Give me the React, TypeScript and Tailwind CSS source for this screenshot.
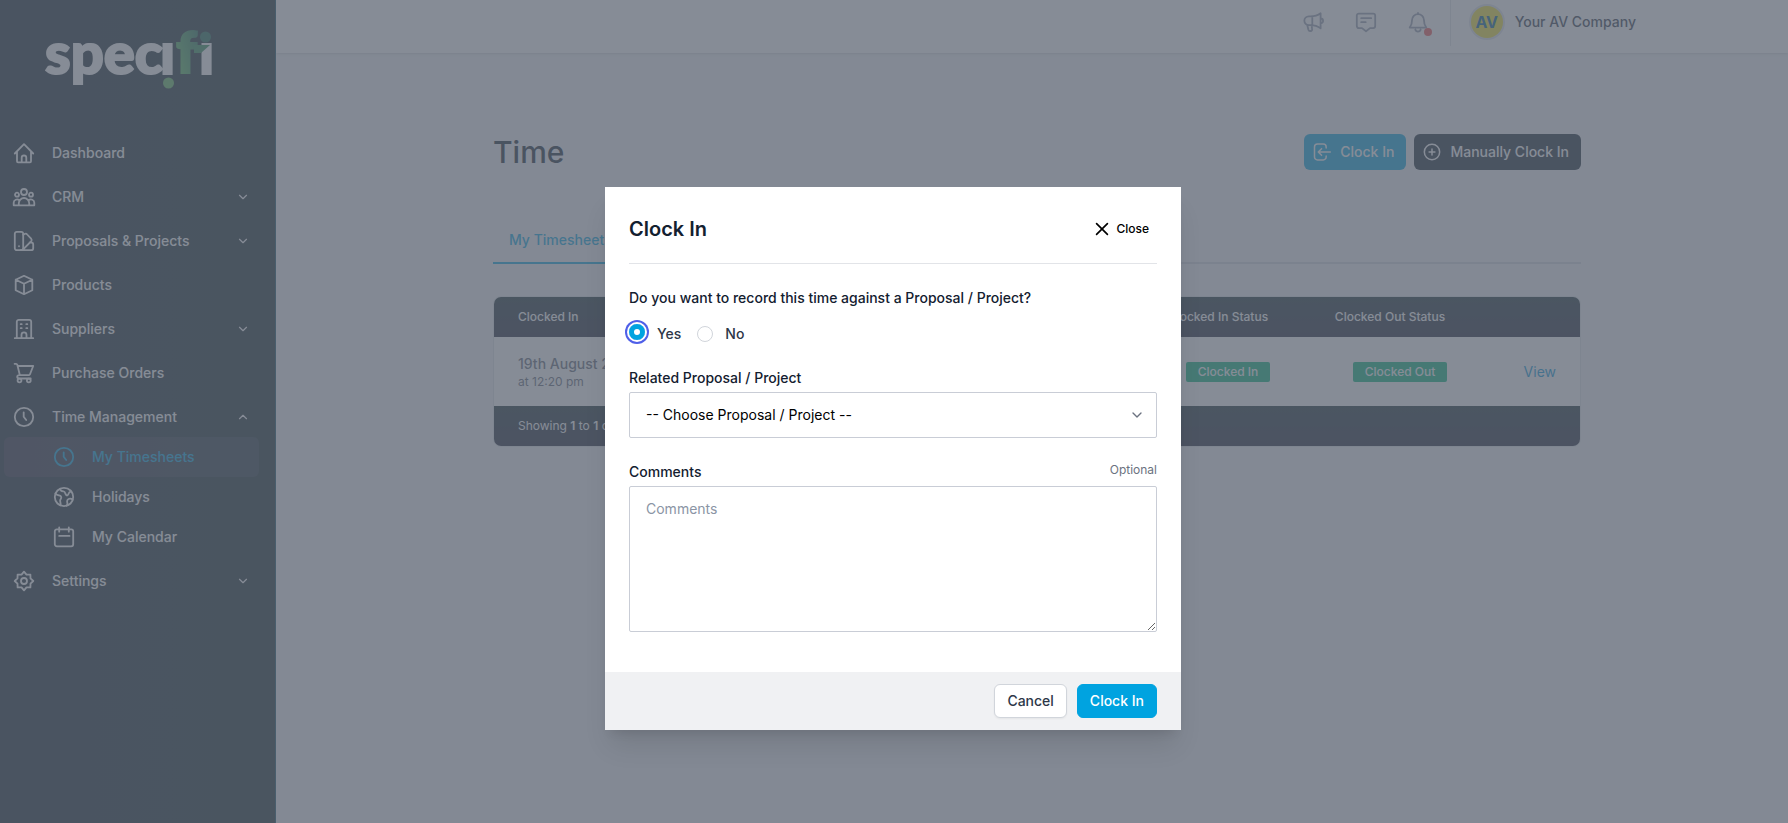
import { useState } from 'react'
import type { ReactNode } from 'react'
import { ChevronDown, ChevronUp } from 'lucide-react'

type NavItem = {
  label: string
  icon: ReactNode
  toggle?: 'open' | 'closed'
  children?: Array<{ label: string; icon: ReactNode; active?: boolean }>
}

const NAV: NavItem[] = [
  { label: 'Dashboard', icon: <HomeIcon /> },
  { label: 'CRM', icon: <PeopleIcon />, toggle: 'closed' },
  { label: 'Proposals & Projects', icon: <SwatchIcon />, toggle: 'closed' },
  { label: 'Products', icon: <BoxIcon /> },
  { label: 'Suppliers', icon: <BuildingIcon />, toggle: 'closed' },
  { label: 'Purchase Orders', icon: <CartIcon /> },
  {
    label: 'Time Management',
    icon: <ClockIcon />,
    toggle: 'open',
    children: [
      { label: 'My Timesheets', icon: <ClockIcon />, active: true },
      { label: 'Holidays', icon: <GlobeIcon /> },
      { label: 'My Calendar', icon: <CalendarIcon /> },
    ],
  },
  { label: 'Settings', icon: <CogIcon />, toggle: 'closed' },
]

export default function App() {
  return (
    <div className="relative flex min-h-screen bg-[#f1f3f5] font-['Inter',sans-serif] text-sm">
      <Sidebar />
      <div className="flex min-w-0 flex-1 flex-col">
        <TopBar />
        <TimePage />
      </div>
      <div className="absolute inset-0 flex items-start justify-center bg-[#5e6673]/75 pt-[187px] pr-0.5">
        <ClockInDialog />
      </div>
    </div>
  )
}

function Sidebar() {
  return (
    <aside className="w-[276px] shrink-0 border-r border-[#0d4a5e] bg-linear-to-r from-[#13222f] to-[#13252a] text-white">
      <div className="px-11 pt-6">
        <Logo />
      </div>
      <nav className="flex flex-col gap-1 pt-[33px] pr-4 pl-1">
        {NAV.map((item) => (
          <div key={item.label}>
            <a href="#" className="flex h-10 items-center gap-4 rounded-md px-2 font-medium">
              {item.icon}
              <span className="flex-1">{item.label}</span>
              {item.toggle === 'closed' && <ChevronDown size={14} className="mr-px" />}
              {item.toggle === 'open' && <ChevronUp size={14} className="mr-px" />}
            </a>
            {item.children?.map((child) => (
              <a
                key={child.label}
                href="#"
                className={
                  child.active
                    ? 'flex h-10 items-center gap-4 rounded-md bg-linear-to-r from-[#2a2a3c] to-[#20333c] pl-12 font-medium text-[#00a3e0]'
                    : 'flex h-10 items-center gap-4 rounded-md pl-12 font-medium'
                }
              >
                {child.icon}
                {child.label}
              </a>
            ))}
          </div>
        ))}
      </nav>
    </aside>
  )
}

function TopBar() {
  return (
    <header className="flex h-[53px] items-start justify-end bg-white pr-[152px] text-[#8f98aa] shadow">
      <div className="flex h-11 items-center gap-7">
        <button type="button" aria-label="Announcements">
          <MegaphoneIcon />
        </button>
        <button type="button" aria-label="Messages">
          <ChatIcon />
        </button>
        <button type="button" aria-label="Notifications" className="relative">
          <BellIcon />
          <span className="absolute -right-0.5 -bottom-0.5 size-2 rounded-full bg-[#f05252]" />
        </button>
      </div>
      <div className="ml-5 flex h-[46px] items-center border-l border-[#dfe2e7] pb-0.5 pl-5">
        <span className="flex size-8 items-center justify-center rounded-full bg-[#eee02c] text-base font-bold text-[#005b94] ring-2 ring-[#dfe2ec]">
          AV
        </span>
        <span className="ml-3 font-medium text-[#2d3748]">Your AV Company</span>
      </div>
    </header>
  )
}

function TimePage() {
  return (
    <main className="pt-[81px] pl-[10px]">
      <div className="mx-auto max-w-6xl px-8">
        <div className="flex h-9 items-center justify-between">
          <h1 className="text-3xl font-medium text-[#13202f]">Time</h1>
          <div className="flex gap-2">
            <button
              type="button"
              className="flex h-9 items-center gap-2 rounded-md bg-[#00a3e0] pr-3 pl-2 font-medium text-white"
            >
              <EnterIcon />
              Clock In
            </button>
            <button
              type="button"
              className="flex h-9 items-center gap-2 rounded-md bg-[#13202f] pr-3 pl-2 font-medium text-white"
            >
              <PlusCircleIcon />
              Manually Clock In
            </button>
          </div>
        </div>

        <div className="mt-12 flex border-b-2 border-[#d3d7de]">
          <a
            href="#"
            className="-mb-0.5 border-b-2 border-[#00a3e0] px-4 py-3 font-medium text-[#00a3e0]"
          >
            My Timesheets
          </a>
        </div>

        <TimesheetTable />
      </div>
    </main>
  )
}

function TimesheetTable() {
  return (
    <div className="mt-8 overflow-hidden rounded-lg border border-[#dfe2e7] bg-white">
      <table className="w-full table-fixed text-xs text-[#5d6675]">
        <thead>
          <tr className="h-10 bg-linear-to-b from-[#13292f] to-[#1a1e33] text-left text-white">
            <th className="pl-6 font-medium">Clocked In</th>
            <th className="w-[172px] pr-5 text-center font-medium">Clocked In Status</th>
            <th className="w-[172px] pr-5 text-center font-medium">Clocked Out Status</th>
            <th className="w-[94px]" />
          </tr>
        </thead>
        <tbody>
          <tr className="h-[69px]">
            <td className="pl-6">
              <div className="text-sm font-medium">19th August 2024</div>
              <div>at 12:20 pm</div>
            </td>
            <td className="text-center">
              <span className="inline-block rounded-xs bg-[#00b37a] px-3 py-0.5 font-medium text-white">
                Clocked In
              </span>
            </td>
            <td className="text-center">
              <span className="inline-block rounded-xs bg-[#00b37a] px-3 py-0.5 font-medium text-white">
                Clocked Out
              </span>
            </td>
            <td className="pr-6 text-right text-sm">
              <a href="#" className="text-[#0094d9]">
                View
              </a>
            </td>
          </tr>
        </tbody>
      </table>
      <div className="flex h-10 items-center bg-linear-to-b from-[#13292f] to-[#1a1e33] px-6 text-xs text-white">
        <p>
          Showing <b className="font-semibold">1</b> to <b className="font-semibold">1</b> of{' '}
          <b className="font-semibold">1</b> results
        </p>
      </div>
    </div>
  )
}

function ClockInDialog() {
  const [related, setRelated] = useState(true)

  return (
    <form
      role="dialog"
      aria-labelledby="dialog-title"
      onSubmit={(e) => e.preventDefault()}
      className="w-full max-w-xl bg-white text-[#13202f] shadow-xl"
    >
      <div className="px-6 pt-7 pb-10">
        <div className="flex items-center justify-between border-b border-[#e2e4e8] pb-5">
          <h2 id="dialog-title" className="text-xl font-semibold">
            Clock In
          </h2>
          <button
            type="button"
            className="flex items-center gap-1 pr-2 text-xs font-medium text-black"
          >
            <CrossIcon />
            Close
          </button>
        </div>

        <fieldset className="mt-6">
          <legend className="font-medium">
            Do you want to record this time against a Proposal / Project?
          </legend>
          <div className="mt-4 flex h-5 items-center gap-4 font-medium text-[#2d3748]">
            <label className="flex items-center gap-3">
              <input
                type="radio"
                name="related"
                checked={related}
                onChange={() => setRelated(true)}
                className="mb-1 size-4 appearance-none rounded-full border border-[#d1d5db] checked:border-5 checked:border-[#00a3e0] checked:ring-2 checked:ring-[#4f5fe8] checked:ring-offset-2"
              />
              Yes
            </label>
            <label className="flex items-center gap-3">
              <input
                type="radio"
                name="related"
                checked={!related}
                onChange={() => setRelated(false)}
                className="size-4 appearance-none rounded-full border border-[#d1d5db] checked:border-5 checked:border-[#00a3e0]"
              />
              No
            </label>
          </div>
        </fieldset>

        <label htmlFor="project" className="mt-6 block font-medium">
          Related Proposal / Project
        </label>
        <div className="relative mt-1">
          <select
            id="project"
            className="block h-[46px] w-full appearance-none rounded-xs border border-[#c9cdd6] bg-white px-4 text-black"
          >
            <option>-- Choose Proposal / Project --</option>
          </select>
          <ChevronDown
            size={16}
            className="pointer-events-none absolute top-[15px] right-3 text-[#6b7280]"
          />
        </div>

        <div className="mt-6 flex justify-between">
          <label htmlFor="comments" className="font-medium">
            Comments
          </label>
          <span className="text-xs text-[#6b7280]">Optional</span>
        </div>
        <textarea
          id="comments"
          placeholder="Comments"
          className="mt-1 block h-[146px] w-full rounded-xs border border-[#c9cdd6] px-4 py-3 placeholder:text-[#8b95a5]"
        />
      </div>

      <div className="flex justify-end gap-2.5 bg-[#f0f1f3] px-6 py-3">
        <button
          type="button"
          className="h-[34px] rounded-md border border-[#d1d5db] bg-white px-3 font-medium text-[#2d3748] shadow-xs"
        >
          Cancel
        </button>
        <button
          type="submit"
          className="h-[34px] rounded-md border border-[#00a3e0] bg-[#00a3e0] px-3 font-medium text-white"
        >
          Clock In
        </button>
      </div>
    </form>
  )
}

function Logo() {
  return (
    <svg
      viewBox="0 0 172 76"
      className="h-[76px] w-[172px] overflow-visible"
      role="img"
      aria-label="specifi"
    >
      <defs>
        <linearGradient id="leaf" x1="0" y1="1" x2="1" y2="0">
          <stop offset="0" stopColor="#5cc85c" />
          <stop offset="1" stopColor="#1a6a52" />
        </linearGradient>
      </defs>
      <g fontFamily="Lato" fontWeight="900" fontSize="58" strokeWidth="2">
        <text x="1" y="50" fill="#fff" stroke="#fff">
          spec
        </text>
        <text x="116" y="50" fill="#fff" stroke="#fff">
          ı
        </text>
        <text x="155" y="50" fill="#fff" stroke="#fff">
          ı
        </text>
        <text x="132" y="49" fill="url(#leaf)" stroke="url(#leaf)">
          f
        </text>
      </g>
      <path d="M150 21h16l-9 8h-7Z" fill="#2f8a56" />
      <circle cx="124.500" cy="59" r="5.500" fill="#5cb85c" />
      <circle cx="161.500" cy="13" r="5.500" fill="#1a6a52" />
    </svg>
  )
}

function Icon({ children, size = 24 }: { children: ReactNode; size?: number }) {
  return (
    <svg
      width={size}
      height={size}
      viewBox="0 0 24 24"
      fill="none"
      stroke="currentColor"
      strokeWidth="1.8"
      strokeLinecap="round"
      strokeLinejoin="round"
      className="shrink-0"
      aria-hidden="true"
    >
      {children}
    </svg>
  )
}

function HomeIcon() {
  return (
    <Icon>
      <path d="M2.800 12.500 12 3.200l9.200 9.300M5 10.500v9.800c0 .6.400 1 1 1h12c.6 0 1-.4 1-1v-9.800" />
      <path d="M9.700 21.200v-4.400a2.300 2.300 0 0 1 4.600 0v4.400" />
    </Icon>
  )
}

function PeopleIcon() {
  return (
    <Icon>
      <circle cx="12" cy="7" r="3" />
      <circle cx="5" cy="9.700" r="2" />
      <circle cx="19" cy="9.700" r="2" />
      <path d="M6.800 20.300v-2.100a5.200 5.200 0 0 1 10.400 0v2.100ZM6.800 20.300H1.700v-2.500a3.300 3.300 0 0 1 5.600-2.400M17.200 20.300h5.100v-2.500a3.300 3.300 0 0 0-5.600-2.400" />
    </Icon>
  )
}

function SwatchIcon() {
  return (
    <Icon>
      <rect x="2.800" y="2.800" width="8.400" height="18.400" rx="2" />
      <path d="M11.200 5.800 12.500 5a2 2 0 0 1 2.700.5l3.900 4.200a2 2 0 0 1 0 2.700L10.500 21M17.600 13.500h1.600a2 2 0 0 1 2 2v3.700a2 2 0 0 1-2 2H8.500" />
      <path d="M7 17.200v.1" />
    </Icon>
  )
}

function BoxIcon() {
  return (
    <Icon>
      <path d="m12 2.800 8.300 4v10.400l-8.300 4-8.300-4V6.800ZM3.700 6.800l8.300 4 8.300-4M12 10.800v10.400" />
    </Icon>
  )
}

function BuildingIcon() {
  return (
    <Icon>
      <path d="M2.800 21.200h18.400M4.800 21V4.800a2 2 0 0 1 2-2h10.400a2 2 0 0 1 2 2V21" />
      <path d="M9.500 21v-3.200a2.500 2.500 0 0 1 5 0V21M8.700 7.200h1M14.300 7.200h1M8.700 11.200h1M14.300 11.200h1" />
    </Icon>
  )
}

function CartIcon() {
  return (
    <Icon>
      <path d="M2.600 2.800h1.500c.6 0 1 .3 1.200.9L7.800 14M5.600 5h15.600l-3.300 8.500a1 1 0 0 1-1 .6H7.500c-1.500 0-2.300.8-2.300 1.700s.8 1.700 2 1.700h11.500" />
      <circle cx="7.500" cy="19.500" r="1.900" />
      <circle cx="16.800" cy="19.500" r="1.900" />
    </Icon>
  )
}

function ClockIcon() {
  return (
    <Icon>
      <circle cx="12" cy="12" r="9.200" />
      <path d="M11.700 7.300v4.400l2.500 3.300" />
    </Icon>
  )
}

function GlobeIcon() {
  return (
    <Icon>
      <circle cx="12" cy="12" r="9.200" />
      <path d="M3.500 8.500C5.500 11 8 10 9 11.500s-.3 2.300-.8 3.600.8 2 .3 5.200M8.200 3.800c0 2 1.800 2.500 3.200 2.600 2 .2 1.600 2.300 2.700 3.500 1.200 1.300 2.200-.2 2.700-1.700.6-1.800 2-1.500 2.600-1.800M20.600 14.600c-1.500-1.300-3.800-1.400-5 .2-1 1.400-.4 2.500-.2 3.500.2 1.100-.2 1.800-.7 2.400" />
    </Icon>
  )
}

function CalendarIcon() {
  return (
    <Icon>
      <rect x="2.800" y="4.300" width="18.400" height="17" rx="2" />
      <path d="M7.200 2.500v4.200M16.800 2.500v4.200M7.200 10.900h10.300" />
    </Icon>
  )
}

function CogIcon() {
  return (
    <Icon>
      <path d="m12 2.700 2.500 3 3.900-.1.100 3.800L21.300 12l-2.800 2.600-.1 3.800-3.900-.1-2.500 3-2.500-3-3.900.1-.1-3.800L2.700 12l2.800-2.600.1-3.800 3.900.1Z" />
      <circle cx="12" cy="12" r="3" />
    </Icon>
  )
}

function MegaphoneIcon() {
  return (
    <Icon>
      <path d="M18.600 3.200v15.200C15.500 16 12 15.200 8.300 15.200H6.800a4.400 4.400 0 0 1 0-8.900h1.500c3.700 0 7.200-.7 10.300-3.100ZM10.300 6.300v8.900M18.600 8.400a2.500 2.500 0 0 1 0 5M5.200 14.800l1.200 5c.6 2 4.300 1.500 3.700-.9l-.5-3.700" />
    </Icon>
  )
}

function ChatIcon() {
  return (
    <Icon>
      <path d="M4.800 3.600h14.400a2 2 0 0 1 2 2v10.500a2 2 0 0 1-2 2H16l-4 3.200-4-3.200H4.800a2 2 0 0 1-2-2V5.600a2 2 0 0 1 2-2ZM7.200 8.200h10M7.200 12.200h4.500" />
    </Icon>
  )
}

function BellIcon() {
  return (
    <Icon>
      <path d="M12 3v1.200M12 4.200a6 6 0 0 1 6 6c0 5 1.800 6.500 2.300 7.400H3.700C4.200 16.700 6 15.200 6 10.200a6 6 0 0 1 6-6ZM9.300 19.500a2.800 2.800 0 0 0 5.400 0" />
    </Icon>
  )
}

function EnterIcon() {
  return (
    <Icon size={20}>
      <path d="M17 7.200V6a3.500 3.500 0 0 0-3.500-3.500h-7A3.500 3.500 0 0 0 3 6v12a3.500 3.500 0 0 0 3.500 3.500h7A3.500 3.500 0 0 0 17 18v-1.200M22 12H7.500M11.500 8l-4 4 4 4" />
    </Icon>
  )
}

function PlusCircleIcon() {
  return (
    <Icon size={20}>
      <circle cx="12" cy="12" r="9.200" />
      <path d="M12 8.500v7M8.500 12h7" />
    </Icon>
  )
}

function CrossIcon() {
  return (
    <Icon size={20}>
      <path d="m5.500 5.500 13 13M18.500 5.500l-13 13" strokeWidth="2" />
    </Icon>
  )
}
